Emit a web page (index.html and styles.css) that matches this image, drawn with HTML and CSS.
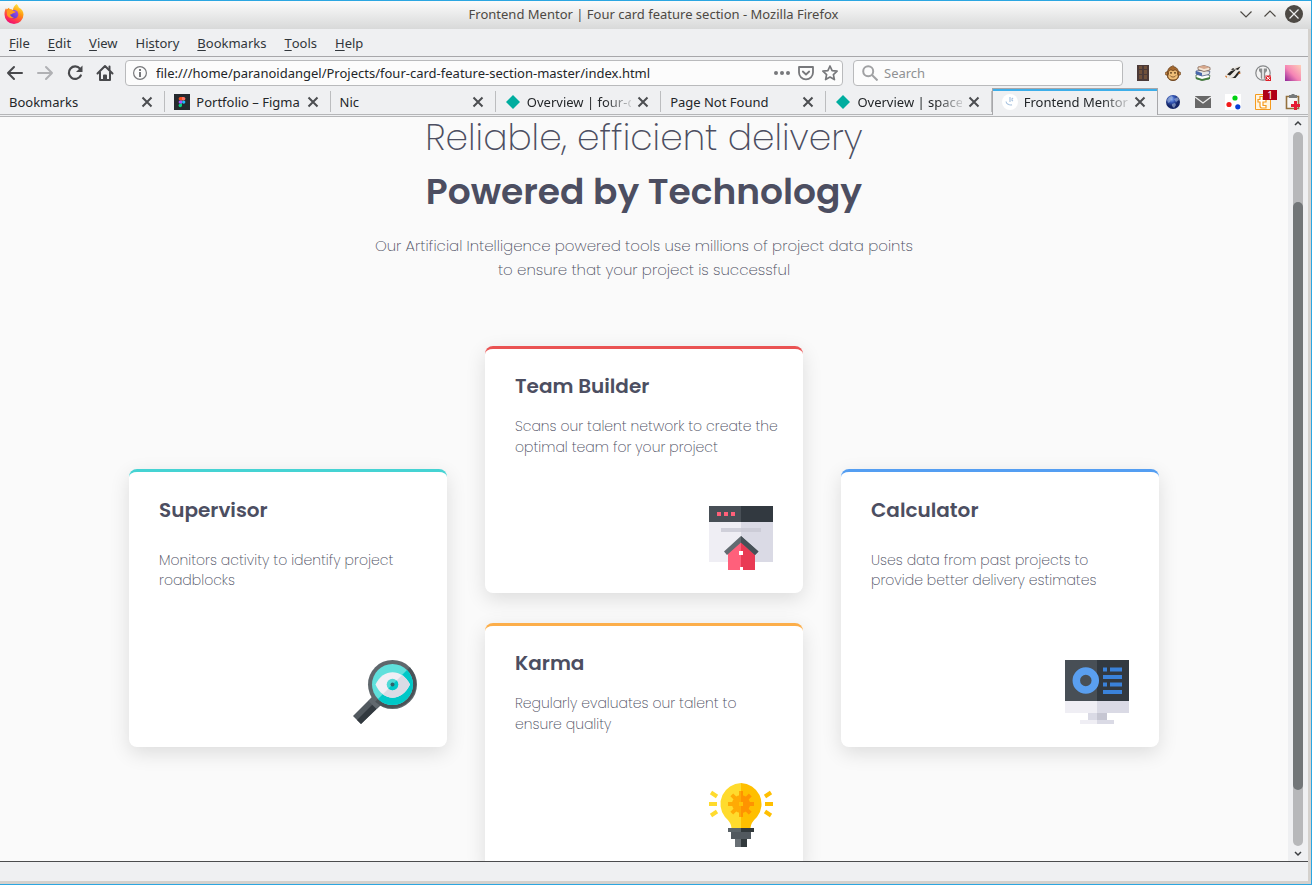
FILE: index.html
```html
<!DOCTYPE html>
<html lang="en">
<head>
<meta charset="utf-8">
<title>Frontend Mentor | Four card feature section</title>
<link rel="stylesheet" href="styles.css">
</head>
<body>
<div class="window">
  <header class="titlebar">
    <svg class="logo" width="20" height="20" viewBox="0 0 20 20" aria-hidden="true">
      <defs>
        <linearGradient id="flame" x1="0.8" y1="0" x2="0.3" y2="1"><stop offset="0" stop-color="#fff44f"/><stop offset=".4" stop-color="#ff980e"/><stop offset=".75" stop-color="#ff3750"/><stop offset="1" stop-color="#eb0878"/></linearGradient>
        <linearGradient id="globe" x1="0" y1="1" x2="1" y2="0"><stop offset="0" stop-color="#4b35c9"/><stop offset="1" stop-color="#a94ff0"/></linearGradient>
      </defs>
      <path d="M12.5 0c1.2 1 1.8 2.2 2.3 3.4 2.800 1.300 4.700 3.900 4.700 7.100A9.500 9.500 0 0 1 .5 10.500C.4 7.500 1.200 5.500 2 4.200l.8 1.300c.7-1 1.400-1.500 2.300-1.800l.4 1.500c1.500-.2 2.500.1 3.500.8C9 3.500 10.500 1.500 12.500 0z" fill="url(#flame)"/>
      <circle cx="10" cy="10.200" r="4.300" fill="url(#globe)"/>
      <path d="M3 6.500c2-1.500 5-1.200 6.800.6l2 .6c-.6 1.300-2.300 1-3.300 1.900-.8.800-1.600 1-2.500.9.500 1.500 2 3 4.200 2.700-3 1.600-6.500.3-7.200-2.500z" fill="#ff9a1f"/>
    </svg>
    <span class="caption">Frontend Mentor | Four card feature section - Mozilla Firefox</span>
    <div class="winbtns">
      <button aria-label="Minimize"><svg width="18" height="18" viewBox="0 0 18 18"><path d="M3.500 6.500l5.500 5.500 5.500-5.500" fill="none" stroke="#4d4944" stroke-width="1.200"/></svg></button>
      <button aria-label="Maximize"><svg width="18" height="18" viewBox="0 0 18 18"><path d="M3.500 11.500L9 6l5.500 5.500" fill="none" stroke="#4d4944" stroke-width="1.200"/></svg></button>
      <button aria-label="Close"><svg width="18" height="18" viewBox="0 0 18 18"><circle cx="9" cy="9" r="9" fill="#4d4944"/><path d="M4.500 4.500l9 9m0-9l-9 9" stroke="#eee" stroke-width="1.200"/></svg></button>
    </div>
  </header>

  <div class="frame">
    <nav class="menubar" aria-label="Menu">
      <button><u>F</u>ile</button><button><u>E</u>dit</button><button><u>V</u>iew</button><button>Hi<u>s</u>tory</button><button><u>B</u>ookmarks</button><button><u>T</u>ools</button><button><u>H</u>elp</button>
    </nav>

    <div class="navbar">
      <div class="navbtns">
        <button aria-label="Back"><svg width="18" height="18" viewBox="0 0 18 18" fill="none" stroke="#48494c" stroke-width="2" stroke-linecap="round" stroke-linejoin="round"><path d="M16 9H2M8 3L2 9l6 6"/></svg></button>
        <button aria-label="Forward" disabled><svg width="18" height="18" viewBox="0 0 18 18" fill="none" stroke="#b0b1b4" stroke-width="2" stroke-linecap="round" stroke-linejoin="round"><path d="M2 9h14M10 3l6 6-6 6"/></svg></button>
        <button aria-label="Reload"><svg width="18" height="18" viewBox="0 0 18 18"><path d="M14.800 11.500A6.300 6.300 0 1 1 14 4.600" fill="none" stroke="#48494c" stroke-width="2.200" stroke-linecap="round"/><path d="M16.500 1.500V8H10z" fill="#48494c"/></svg></button>
        <button aria-label="Home"><svg width="18" height="18" viewBox="0 0 18 18" fill="none" stroke="#48494c" stroke-width="2" stroke-linejoin="round" stroke-linecap="round"><path d="M1.500 9.500L9 2l7.500 7.500M4 8.500V16h10V8.500"/><path d="M8 15.500v-4h2v4M13.500 2.500v3"/></svg></button>
      </div>
      <div class="field url">
        <svg width="16" height="16" viewBox="0 0 16 16"><circle cx="8" cy="8" r="6.400" fill="none" stroke="#77787b" stroke-width="1.200"/><path d="M7 7h2v5H7zM7 4h2v2H7z" fill="#77787b"/></svg>
        <input type="text" aria-label="Address" value="file:///home/paranoidangel/Projects/four-card-feature-section-master/index.html">
        <button aria-label="Page actions"><svg width="16" height="16" viewBox="0 0 16 16" fill="#77787b"><circle cx="2" cy="8" r="2"/><circle cx="8" cy="8" r="2"/><circle cx="14" cy="8" r="2"/></svg></button>
        <button aria-label="Save to Pocket"><svg width="16" height="16" viewBox="0 0 16 16" fill="none" stroke="#77787b" stroke-width="1.800" stroke-linejoin="round" stroke-linecap="round"><path d="M1 2h14v5.500a7 6.800 0 0 1-14 0z"/><path d="M4.800 6.500L8 9.500l3.200-3"/></svg></button>
        <button aria-label="Bookmark this page"><svg width="16" height="16" viewBox="0 0 16 16" fill="none" stroke="#77787b" stroke-width="1.700" stroke-linejoin="round"><path d="M8 1l2.100 4.600 5 .6-3.700 3.400 1 5L8 12.100l-4.400 2.500 1-5L.9 6.200l5-.6z"/></svg></button>
      </div>
      <div class="field search">
        <svg width="16" height="16" viewBox="0 0 16 16" fill="none" stroke="#a0a1a3" stroke-width="2"><circle cx="6.200" cy="6.200" r="5"/><path d="M10 10l5.500 5.500"/></svg>
        <input type="text" aria-label="Search" placeholder="Search">
      </div>
      <div class="addons">
        <button aria-label="Cookies"><svg width="16" height="16" viewBox="0 0 16 16"><path d="M2 0h12v16H2z" fill="#4b3a38"/><path d="M4 1h3v3H4zM9 1h3v3H9zM4 5h3v4H4zM9 5h3v4H9zM4 10h3v4H4zM9 10h3v4H9z" fill="#70503a"/></svg></button>
        <button aria-label="Monkey"><svg width="16" height="16" viewBox="0 0 16 16" stroke="#68401b" stroke-width=".8"><circle cx="2" cy="8.500" r="1.700" fill="#d99854"/><circle cx="14" cy="8.500" r="1.700" fill="#d99854"/><path d="M3 13C1 8 3 2 7 1.500l1-1 .5 1.200C13 2 15 8 13 13c-2 3.500-8 3.500-10 0z" fill="#a5682e"/><path d="M3.500 9C3 5 6 4 8 6c2-2 5-1 4.500 3 2 3-.5 6-4.500 6s-6.500-3-4.500-6z" fill="#f0bf78"/><path d="M5 10.500c1.500 2 4.500 2 6 0" fill="none"/><circle cx="6" cy="7.800" r=".6" fill="#243b28"/><circle cx="10" cy="7.800" r=".6" fill="#243b28"/></svg></button>
        <button aria-label="Library"><svg width="16" height="16" viewBox="0 0 16 16" stroke-width=".7" stroke-linejoin="round"><path d="M1 10l8-1.500 6 2-1 3.500-7 1.500-6-2z" fill="#fff" stroke="#31572c"/><path d="M1 12l6 2 8-2v2l-8 1.800L1 14z" fill="#427e3d"/><path d="M1 6l8-1 6 1.500-1 3-7 1.500L1 9z" fill="#e7e6e5" stroke="#354778"/><path d="M1 6l6 2v3L1 9z" fill="#4767ac"/><path d="M3 2l6-1.500 6 2V5L9 6.500 3 4.500z" fill="#f4e6d6" stroke="#6b4d3d"/><path d="M3 2l6-1.500 6 2-6 1.600z" fill="#d6a78c"/></svg></button>
        <button aria-label="Badger"><svg width="16" height="16" viewBox="0 0 16 16"><path d="M0 11C1 8 3 7 5 6c0-3 2-4 4-3 2-2 4-2.500 6.500-1.500-1 1-1 2 0 4C14 9 13 12 9.500 14 6 14.500 1 14 0 11z" fill="#ebe7e1"/><path d="M2 9.500L6 6l5-1.500-6 6zM6 13c4 0 5-5 8-7l1.500 1-5 6zM6 5l2-2 2 1.500zM10 4l5.500-2.500L13 5z" fill="#242321"/><path d="M0 11c2-1 2.500 1 1.500 2zM13 9l2-2 .5 2z" fill="#d8752a"/></svg></button>
        <button aria-label="Passwords"><svg width="17" height="17" viewBox="0 0 17 17"><circle cx="8" cy="8" r="7.200" fill="#f3f3f3" stroke="#858789" stroke-width="1.200"/><path d="M4 3.500h3.200v11L5.800 13V8L4 6zM12 3.500H8.800v11l1.400-1.500V8L12 6z" fill="#8c8e8f"/><path d="M10.500 10.500H16V16h-5.500z" fill="#e01e28"/><path d="M11.500 11.500l3.500 3.500m0-3.500L11.500 15" stroke="#fff"/></svg></button>
        <button aria-label="Gradient"><span class="swatch"></span></button>
      </div>
    </div>

    <div class="tabrow">
      <div class="tabs" role="tablist">
        <div class="tab"><button class="label" role="tab">Bookmarks</button><button class="x" aria-label="Close tab"><svg width="12" height="12" viewBox="0 0 12 12"><path d="M1.500 1.500l9 9m0-9l-9 9"/></svg></button></div>
        <div class="tab"><svg width="16" height="16" viewBox="0 0 16 16"><path d="M0 0h16v16H0z" fill="#25292e"/><path d="M8 3H6.300a1.700 1.700 0 0 0 0 3.400H8z" fill="#f24e1e"/><path d="M8 3h1.700a1.700 1.700 0 0 1 0 3.400H8z" fill="#ff7262"/><path d="M8 6.400H6.300a1.700 1.700 0 0 0 0 3.400H8z" fill="#a259ff"/><circle cx="9.700" cy="8.100" r="1.700" fill="#1abcfe"/><path d="M8 9.800H6.300A1.700 1.700 0 1 0 8 11.500z" fill="#0acf83"/></svg><button class="label" role="tab">Portfolio – Figma</button><button class="x" aria-label="Close tab"><svg width="12" height="12" viewBox="0 0 12 12"><path d="M1.500 1.500l9 9m0-9l-9 9"/></svg></button></div>
        <div class="tab"><button class="label" role="tab">Nic</button><button class="x" aria-label="Close tab"><svg width="12" height="12" viewBox="0 0 12 12"><path d="M1.500 1.500l9 9m0-9l-9 9"/></svg></button></div>
        <div class="tab"><svg width="16" height="16" viewBox="0 0 16 16"><path d="M8 1l7 7-7 7-7-7z" fill="#00ad9f"/></svg><button class="label fade" role="tab">Overview | four-c</button><button class="x" aria-label="Close tab"><svg width="12" height="12" viewBox="0 0 12 12"><path d="M1.500 1.500l9 9m0-9l-9 9"/></svg></button></div>
        <div class="tab"><button class="label" role="tab">Page Not Found</button><button class="x" aria-label="Close tab"><svg width="12" height="12" viewBox="0 0 12 12"><path d="M1.500 1.500l9 9m0-9l-9 9"/></svg></button></div>
        <div class="tab"><svg width="16" height="16" viewBox="0 0 16 16"><path d="M8 1l7 7-7 7-7-7z" fill="#00ad9f"/></svg><button class="label fade" role="tab">Overview | space</button><button class="x" aria-label="Close tab"><svg width="12" height="12" viewBox="0 0 12 12"><path d="M1.500 1.500l9 9m0-9l-9 9"/></svg></button></div>
        <div class="tab active"><svg width="16" height="16" viewBox="0 0 16 16"><circle cx="8" cy="8" r="8" fill="#fff"/><path d="M4 7.500c.5 2.500 3 4 6 3.300M8 3v5m3-4L9.500 5.500M11 7L9.500 6" fill="none" stroke="#aac4e0" stroke-width="1.200"/></svg><button class="label fade" role="tab" aria-selected="true">Frontend Mentor</button><button class="x" aria-label="Close tab"><svg width="12" height="12" viewBox="0 0 12 12"><path d="M1.500 1.500l9 9m0-9l-9 9"/></svg></button></div>
      </div>
      <div class="addons">
        <button aria-label="Globe"><svg width="16" height="16" viewBox="0 0 16 16"><defs><radialGradient id="earth" cx=".4" cy=".3"><stop offset="0" stop-color="#8db2f5"/><stop offset=".5" stop-color="#3456b5"/><stop offset="1" stop-color="#142567"/></radialGradient></defs><circle cx="8" cy="8" r="7" fill="url(#earth)"/><path d="M2 6l2-3 3-1 1 2-2 1-1 3-2 1zM9 5l4-2 1 3-3 2zM7 10l3-1 1 2-2 3-2-2z" fill="#9bafd4" opacity=".65"/></svg></button>
        <button aria-label="Mail"><svg width="16" height="16" viewBox="0 0 16 16"><path d="M0 2h16v12H0z" fill="#686868"/><path d="M0 3l8 6 8-6" fill="none" stroke="#eee" stroke-width="1.300"/></svg></button>
        <button aria-label="Colours"><svg width="16" height="16" viewBox="0 0 16 16"><path d="M0 0h16v16H0z" fill="#fff"/><circle cx="10" cy="4" r="2.600" fill="#00d112"/><circle cx="4" cy="10.500" r="2.600" fill="#f21b1b"/><circle cx="12.800" cy="12.800" r="2.600" fill="#073fd6"/></svg></button>
        <button class="counter" aria-label="Tab counter"><svg width="16" height="16" viewBox="0 0 16 16"><path d="M.5.5h15v15H.5z" fill="#fff4df" stroke="#f59a1d"/><path d="M5 2.500h3v3h3v2.500H8v3.500h3V14H7q-2 0-2-2V8H3V5.500h2z" fill="#fff" stroke="#f59a1d" stroke-width="1.200"/></svg><span class="badge">1</span></button>
        <button aria-label="Clipboard"><svg width="16" height="16" viewBox="0 0 16 16"><path d="M1.500 2.500h12v12h-12z" fill="#f6f6f6" stroke="#94713d" stroke-width="1.600"/><path d="M4 1h2l1-1h2l1 1h2v3H4z" fill="#777a7b"/><path d="M9 7h3v3h3v3h-3v3H9v-3H6v-3h3z" fill="#e51c34"/></svg></button>
      </div>
    </div>

    <div class="viewport">
      <main class="page">
        <h1>Reliable, efficient delivery <strong>Powered by Technology</strong></h1>
        <p class="intro">Our Artificial Intelligence powered tools use millions of project data points to ensure that your project is successful</p>
        <div class="cards">
          <article class="card tall cyan">
            <h2>Supervisor</h2>
            <p>Monitors activity to identify project<br>roadblocks</p>
            <svg width="64" height="64" viewBox="0 0 64 64">
              <path d="M0 56L20 36l8 8L8 64z" fill="#52595f"/><path d="M4 60L25 39l5 4L8 64z" fill="#32393f"/>
              <path d="M15.500 41l4-4 8 8-4 4z" fill="#61686e"/>
              <circle cx="39.500" cy="24.500" r="24.500" fill="#5f676c"/><path d="M56.800 7.200a24.500 24.500 0 0 1-34.600 34.600z" fill="#4a5257"/>
              <circle cx="39.500" cy="24.500" r="20.500" fill="#5fe0dc"/><path d="M54 10a20.500 20.500 0 0 1-29 29z" fill="#00c8c8"/>
              <path d="M22.500 24.500C30 8 49 8 57 24.500 49 42 30 42 22.500 24.500z" fill="#f0eff5"/><path d="M57 24.500C49 40 37 40 29.800 34.200L48.800 15.200Q54 18 57 24.500z" fill="#dadbe5"/>
              <circle cx="39.500" cy="24.500" r="5.800" fill="#4fd9d6"/><path d="M43.600 20.400a5.800 5.800 0 0 1-8.200 8.200z" fill="#00c8c8"/><circle cx="39.500" cy="24.500" r="2" fill="#32606a"/>
            </svg>
          </article>
          <div class="stack">
            <article class="card red">
              <h2>Team Builder</h2>
              <p>Scans our talent network to create the<br>optimal team for your project</p>
              <svg width="64" height="64" viewBox="0 0 64 64">
                <path d="M0 0h32v56H0z" fill="#efeef4"/><path d="M32 0h32v56H32z" fill="#dadae5"/>
                <path d="M0 0h32v16H0z" fill="#484f56"/><path d="M32 0h32v16H32z" fill="#323940"/>
                <path d="M8 6h4v4H8zM15 6h4v4h-4zM22 6h4v4h-4z" fill="#ff6079"/><path d="M12 22h40v4H12z" fill="#c8c8d3" opacity=".8"/>
                <path d="M19 45l13-12v31H19z" fill="#ff607b"/><path d="M32 33l14 12v19H32z" fill="#e93a54"/>
                <path d="M32 30L15 45.500l3 3.500 14-12.500 14 12.500 3.500-3.500z" fill="#626b71"/><path d="M32 30l17.500 15.500L46 49 32 36.500z" fill="#465057"/>
                <path d="M30 45h4v4h-4zM31 61h3v3h-3z" fill="#fff"/>
              </svg>
            </article>
            <article class="card orange">
              <h2>Karma</h2>
              <p>Regularly evaluates our talent to<br>ensure quality</p>
              <svg width="64" height="64" viewBox="0 0 64 64">
                <path d="M32 0a21 21 0 0 0-16 34q6.500 6 6.500 11H32z" fill="#ffdb2d"/><path d="M32 0a21 21 0 0 1 16 34q-6.500 6-6.500 11H32z" fill="#ffbf00"/>
                <path d="M22 49h20v7H22z" fill="#52595f"/><path d="M19 45h26v4H19z" fill="#5b6469"/><path d="M32 45h13v4H32z" fill="#32393c"/><path d="M26 56h6v8h-6z" fill="#686f74"/><path d="M32 56h6v8h-6z" fill="#32393c"/>
                <g stroke="#ffaa05" stroke-width="4"><path d="M32 8v26M19 21h26M22.800 11.800l18.400 18.400M41.200 11.800L22.800 30.200"/></g><circle cx="32" cy="21" r="9" fill="#ffaa05"/>
                <path d="M32 8h2v4.500l3 1.200 2.800-3 2.800 2.800-3 3 1.200 2.500H45v4h-4.200l-1.200 3 3 2.800-2.800 2.800-3-3-2.800 1.200V34h-2z" fill="#ff9300"/><path d="M30 19h4v4h-4z" fill="#ffc107"/>
                <g stroke-width="4"><path d="M0 21h8M2 9.500l6 4M2 32.500l6-4" stroke="#ffdb2d"/><path d="M56 21h8M62 9.500l-6 4M62 32.500l-6-4" stroke="#ffbf00"/></g>
              </svg>
            </article>
          </div>
          <article class="card tall blue">
            <h2>Calculator</h2>
            <p>Uses data from past projects to<br>provide better delivery estimates</p>
            <svg width="64" height="64" viewBox="0 0 64 64">
              <path d="M0 0h32v41H0z" fill="#484f56"/><path d="M32 0h32v41H32z" fill="#323940"/>
              <path d="M0 41h32v12H0z" fill="#efeef4"/><path d="M32 41h32v12H32z" fill="#dadae5"/>
              <path d="M23 53h9v8h-9z" fill="#dadae5"/><path d="M32 53h10v8H32z" fill="#c6c6d2"/><path d="M15 60h17v4H15z" fill="#efeef4"/><path d="M32 60h17v4H32z" fill="#dadae5"/>
              <circle cx="20.800" cy="20.500" r="9.500" fill="none" stroke="#5a9ff0" stroke-width="7.500"/>
              <path d="M38 7.500h4v4h-4zM45 7.500h12v4H45zM38 15h19v4H38zM38 22.500h4v4h-4zM45 22.500h12v4H45zM38 30h19v4H38z" fill="#3a82da"/>
            </svg>
          </article>
        </div>
      </main>
      <div class="scroll" aria-hidden="true">
        <svg width="10" height="15" viewBox="0 0 10 15"><path d="M2 8l3-3 3 3" fill="none" stroke="#3b3e41" stroke-width="1.500"/></svg>
        <div class="track"><div class="thumb"></div></div>
        <svg width="10" height="15" viewBox="0 0 10 15"><path d="M2 6l3 3 3-3" fill="none" stroke="#3b3e41" stroke-width="1.500"/></svg>
      </div>
    </div>
    <footer class="status"></footer>
  </div>
</div>
</body>
</html>
```
FILE: styles.css
```css
* { box-sizing: border-box; }
body { margin: 0; font: 13px/18px "Noto Sans", sans-serif; color: #31363b; }
button { border: 0; padding: 0; background: none; font: inherit; color: inherit; display: flex; align-items: center; justify-content: center; }
svg { display: block; flex: none; }

.window { height: 100vh; display: flex; flex-direction: column; border: solid #2ba6e1; border-width: 1px 1px 1px 0; overflow: hidden; }
.titlebar { flex: none; height: 28px; display: grid; grid-template-columns: 1fr auto 1fr; align-items: center; padding: 0 8px 2px 4px; background: linear-gradient(#fbfbfb, #d8d9d9); color: #4d4944; }
.winbtns { display: flex; justify-content: flex-end; gap: 6px; }
.frame { flex: 1; min-height: 0; display: flex; flex-direction: column; border: solid #d4d1cd; border-width: 0 3px 3px 0; background: #eff0f2; }

.menubar { flex: none; height: 28px; display: flex; align-items: center; gap: 18px; padding: 0 9px; border-bottom: 1px solid #a7a7aa; }
.menubar u { text-underline-offset: 2px; }
.navbar { flex: none; height: 32px; display: flex; align-items: center; }
.navbtns { display: flex; gap: 12px; padding: 0 11px 0 6px; }
.field { height: 26px; min-width: 0; display: flex; align-items: center; gap: 8px; padding: 0 4px 0 6px; border: 1px solid #b9babc; border-radius: 4px; background: #fcfcfc; }
.field input { flex: 1; min-width: 0; border: 0; padding: 0; background: none; font: inherit; color: #232629; outline: 0; }
.field input::placeholder { color: #8f9193; opacity: 1; }
.url { flex: 718 1 718px; }
.search { flex: 270 1 270px; margin: 0 5px 0 10px; }
.search { padding-left: 8px; gap: 6px; }
.addons { flex: none; display: flex; }
.addons button { width: 30px; height: 24px; }
.swatch { width: 16px; height: 16px; background: linear-gradient(225deg, #ffd0b8, #f585b5 55%, #8f2698); }

.tabrow { flex: none; height: 28px; display: flex; border-bottom: 1px solid #b5b6b8; }
.tabs { flex: 1; min-width: 0; display: flex; height: 26px; border-bottom: 1px solid #b5b6b8; }
.tabrow .addons { height: 26px; border-bottom: 1px solid #b5b6b8; align-items: flex-end; }
.tab { flex: 1 1 0; min-width: 0; display: flex; align-items: center; gap: 6px; padding: 0 11px 0 9px; border-right: 1px solid #bcbdbf; border-image: linear-gradient(transparent 3px, #bcbdbf 3px, #bcbdbf 22px, transparent 22px) 1; }
.tab .label { flex: 1; min-width: 0; justify-content: flex-start; white-space: nowrap; color: #232629; }
.tab .fade { -webkit-mask-image: linear-gradient(90deg, #000 75%, transparent 105%); mask-image: linear-gradient(90deg, #000 75%, transparent 105%); }
.tab .x { flex: none; }
.x path { stroke: #4c4e51; stroke-width: 2; }
.tab.active { height: 27px; margin-top: -1px; border: solid #a7a7aa; border-width: 1px 1px 0; border-image: none; background: #eff0f2; box-shadow: inset 0 2px #3daee9; }
.counter { position: relative; }
.badge { position: absolute; right: 1px; top: 0; width: 14px; height: 10px; background: #b00017; color: #fff; font-size: 10px; line-height: 10px; }

.viewport { flex: 1; min-height: 0; display: flex; background: #fafafa; }
.page { flex: 1; min-width: 0; overflow: hidden; padding-top: 1px; color: #4c4e61; font-family: "Poppins ExtraLight", Poppins, sans-serif; }
.page h1 { margin: 0; font-size: 36px; line-height: 40px; font-weight: 300; text-align: center; }
.page h1 strong { display: block; margin-top: 14px; font-family: Poppins, sans-serif; font-weight: 600; }
.intro { max-width: 550px; margin: 22px auto 64px; font-size: 15px; line-height: 24px; font-weight: 300; text-align: center; }
.cards { display: grid; grid-template-columns: repeat(3, minmax(0, 318px)); gap: 38px; justify-content: center; align-items: center; }
.stack { display: grid; gap: 30px; }
.card { display: flex; flex-direction: column; padding: 21px 20px 23px 30px; border-top: 3px solid; border-radius: 8px; background: #fff; box-shadow: 0 6px 20px rgba(0, 0, 0, .12); }
.card h2 { margin: 0 0 14px; font-family: Poppins, sans-serif; font-size: 20px; line-height: 32px; font-weight: 600; color: #4c4e61; }
.card p { margin: 0 0 48px; font-size: 14px; line-height: 21px; font-weight: 300; color: #4c4e61; }
.card svg { align-self: flex-end; margin-right: 10px; }
.tall { padding-top: 22px; }
.tall h2 { margin-bottom: 24px; }
.tall p { margin-bottom: 70px; line-height: 20px; }
.cyan { border-color: #45d3d3; }
.red { border-color: #ea5353; }
.orange { border-color: #fcae4a; }
.blue { border-color: #549ef2; }

.scroll { flex: none; width: 20px; display: flex; flex-direction: column; align-items: center; background: #eff0f2; }
.track { flex: 1; width: 10px; border-radius: 5px; background: #b7b8ba; padding: 70px 0 56px; }
.thumb { height: 100%; border-radius: 5px; background: #727678; }
.status { flex: none; height: 20px; border-top: 1px solid #4b4c4e; }
```
